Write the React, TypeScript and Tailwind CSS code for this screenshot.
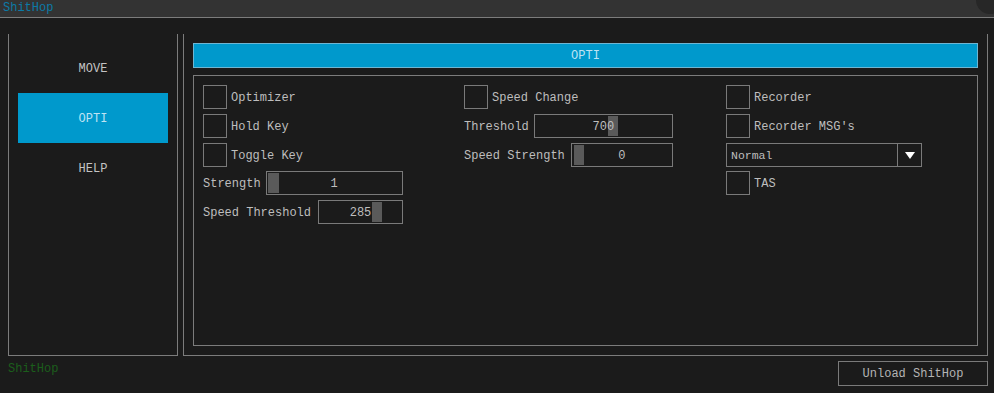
import React from 'react';

// Small ImGui-like widgets
const Checkbox: React.FC<{ label: string; className?: string }> = ({ label, className = '' }) => (
  <div className={`flex items-center h-[24px] ${className}`}>
    <div className="w-[24px] h-[24px] border border-[#7a7a7a] shrink-0" />
    <span className="ml-[4px] pt-[2px]">{label}</span>
  </div>
);

const Slider: React.FC<{
  label: string;
  value: string;
  boxClass: string;
  handleClass: string;
  className?: string;
}> = ({ label, value, boxClass, handleClass, className = '' }) => (
  <div className={`flex items-center h-[24px] ${className}`}>
    <span className="whitespace-pre pt-[2px]">{label}</span>
    <div className={`relative h-[24px] shrink-0 border border-[#7a7a7a] flex items-center justify-center ${boxClass}`}>
      <div className={`absolute top-[1px] bottom-[1px] w-[10px] bg-[#5a5a5a] ${handleClass}`} />
      <span className="relative pt-[2px]">{value}</span>
    </div>
  </div>
);

const NavItem: React.FC<{ label: string; active?: boolean }> = ({ label, active }) => (
  <div
    className={`h-[50px] w-[150px] flex items-center justify-center pt-[2px] ${
      active ? 'bg-[#0099cc] text-[#bfe3f3]' : 'text-[#c4c4c4]'
    }`}
  >
    {label}
  </div>
);

export default function App() {
  return (
    <div
      className="relative w-[994px] h-[393px] overflow-hidden bg-[#1b1b1b] text-[12px] leading-[14px] text-[#bebebe] flex flex-col"
      style={{ fontFamily: '"Liberation Mono", "DejaVu Sans Mono", monospace' }}
    >
      {/* Title bar */}
      <div className="h-[18px] shrink-0 bg-[#333333] border-b border-[#7c7c7c] flex items-start px-[3px] pt-[1px]">
        <span className="text-[#0c7aa6]">ShitHop</span>
      </div>
      <div className="absolute right-[-10px] top-[-14px] w-[28px] h-[28px] rounded-full bg-[#272727]" />

      {/* Panels */}
      <div className="flex mt-[16px] pl-[8px] gap-[5px] h-[322px]">
        {/* Left nav */}
        <div className="w-[170px] shrink-0 border-x border-b border-[#7c7c7c] pt-[9px] pl-[9px] flex flex-col">
          <NavItem label="MOVE" />
          <NavItem label="OPTI" active />
          <NavItem label="HELP" />
        </div>

        {/* Right content */}
        <div className="w-[805px] shrink-0 border-x border-b border-[#7c7c7c] px-[9px] pt-[9px] flex flex-col">
          <div className="h-[25px] bg-[#0099cc] border border-[#6fb6d3] flex items-center justify-center pt-[1px] text-[#bfe3f3]">
            OPTI
          </div>
          <div className="mt-[7px] h-[271px] border border-[#7c7c7c] pl-[9px] pt-[9px] flex">
            {/* Column 1 */}
            <div className="w-[261px] flex flex-col gap-[5px]">
              <Checkbox label="Optimizer" />
              <Checkbox label="Hold Key" />
              <Checkbox label="Toggle Key" />
              <Slider
                className="-mt-px"
                label="Strength"
                value="1"
                boxClass="ml-[5px] w-[137px]"
                handleClass="left-[1px] w-[11px]"
              />
              <Slider
                label="Speed Threshold"
                value="285"
                boxClass="ml-[7px] w-[85px]"
                handleClass="left-[53px]"
              />
            </div>

            {/* Column 2 */}
            <div className="w-[262px] flex flex-col gap-[5px]">
              <Checkbox label="Speed Change" />
              <Slider
                label="Threshold"
                value="700"
                boxClass="ml-[5px] w-[139px]"
                handleClass="left-[73px]"
              />
              <Slider
                label="Speed Strength"
                value="0"
                boxClass="ml-[6px] w-[102px]"
                handleClass="left-[2px]"
              />
            </div>

            {/* Column 3 */}
            <div className="flex flex-col gap-[5px]">
              <Checkbox label="Recorder" />
              <Checkbox label="Recorder MSG's" />
              <div className="w-[196px] h-[24px] border border-[#7a7a7a] flex">
                <div className="flex-1 flex items-center pl-[4px] pt-[2px] text-[11.5px]">Normal</div>
                <div className="w-[24px] border-l border-[#7a7a7a] flex items-center justify-center">
                  <svg width="10" height="7" viewBox="0 0 10 7">
                    <path d="M0 0 H10 L5 7 Z" fill="#ffffff" />
                  </svg>
                </div>
              </div>
              <Checkbox label="TAS" className="-mt-px" />
            </div>
          </div>
        </div>
      </div>

      {/* Footer */}
      <div className="flex justify-between items-start pl-[8px] pr-[6px] mt-[5px]">
        <span className="text-[#1b5e1b] pt-[1px]">ShitHop</span>
        <div className="w-[150px] h-[25px] border border-[#7a7a7a] flex items-center justify-center pt-[1px] text-[#b4b4b4]">
          Unload ShitHop
        </div>
      </div>
    </div>
  );
}
